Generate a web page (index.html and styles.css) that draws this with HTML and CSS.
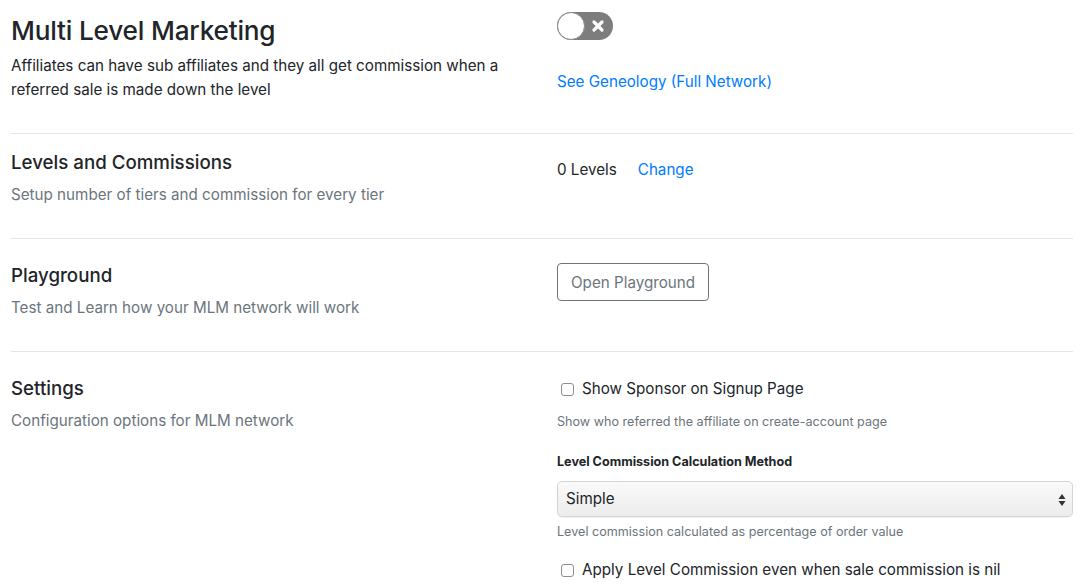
FILE: index.html
```html
<!DOCTYPE html>
<html>
<head>
<meta charset="utf-8">
<link rel="stylesheet" href="styles.css">
</head>
<body>
<div class="page">
  <section class="row row-mlm">
    <div class="col-left">
      <h3 class="title-lg">Multi Level Marketing</h3>
      <p class="desc-dark">Affiliates can have sub affiliates and they all get commission when a referred sale is made down the level</p>
    </div>
    <div class="col-right">
      <div class="toggle">
        <span class="knob"></span>
        <svg class="toggle-x" width="14" height="14" viewBox="0 0 14 14"><path d="M3 3 L11 11 M11 3 L3 11" stroke="#fff" stroke-width="3.2" stroke-linecap="round"/></svg>
      </div>
      <a class="link geneology" href="#">See Geneology (Full Network)</a>
    </div>
  </section>
  <hr class="sep">
  <section class="row row-levels">
    <div class="col-left">
      <h5 class="title">Levels and Commissions</h5>
      <p class="desc">Setup number of tiers and commission for every tier</p>
    </div>
    <div class="col-right">
      <div class="levels"><span>0 Levels</span><a class="link" href="#">Change</a></div>
    </div>
  </section>
  <hr class="sep">
  <section class="row row-play">
    <div class="col-left">
      <h5 class="title">Playground</h5>
      <p class="desc">Test and Learn how your MLM network will work</p>
    </div>
    <div class="col-right">
      <button class="btn">Open Playground</button>
    </div>
  </section>
  <hr class="sep">
  <section class="row row-settings">
    <div class="col-left">
      <h5 class="title">Settings</h5>
      <p class="desc">Configuration options for MLM network</p>
    </div>
    <div class="col-right">
      <label class="check"><span class="box"></span>Show Sponsor on Signup Page</label>
      <small class="help help-first">Show who referred the affiliate on create-account page</small>
      <div class="label-bold">Level Commission Calculation Method</div>
      <div class="select">
        <span>Simple</span>
        <svg class="arrows" width="8" height="14" viewBox="0 0 8 14"><path d="M4 1 L7.5 6 L0.5 6 Z M4 13 L7.5 8 L0.5 8 Z" fill="#333"/></svg>
      </div>
      <small class="help">Level commission calculated as percentage of order value</small>
      <label class="check check-last"><span class="box"></span>Apply Level Commission even when sale commission is nil</label>
    </div>
  </section>
</div>
</body>
</html>
```
FILE: styles.css
```css
* { box-sizing: border-box; }
html, body { margin: 0; padding: 0; background: #fff; }
body {
  font-family: Inter, "Noto Sans", "Liberation Sans", sans-serif;
  color: #212529;
  font-size: 15.2px;
  line-height: 24px;
}
.page { padding: 0 9px 0 11px; }
.row {
  display: grid;
  grid-template-columns: 546px 1fr;
}
h3, h5, p { margin: 0; }
.title-lg {
  font-size: 26.2px;
  font-weight: 500;
  line-height: 34px;
  letter-spacing: -0.2px;
  margin-bottom: 6px;
}
.desc-dark { font-size: 15.2px; line-height: 24px; max-width: 500px; }
.title {
  font-size: 18.7px;
  font-weight: 500;
  line-height: 24px;
  margin-bottom: 8px;
}
.desc { color: #6c757d; font-size: 15.2px; line-height: 24px; }
.sep { border: 0; border-top: 1px solid #e5e5e5; margin: 0; }

.row-mlm { padding-top: 14px; padding-bottom: 31px; }
.row-levels { padding-top: 17px; padding-bottom: 31px; }
.row-play { padding-top: 25px; padding-bottom: 31px; }
.row-settings { padding-top: 25px; }

.col-right { display: flex; flex-direction: column; align-items: flex-start; }

.toggle {
  position: relative;
  width: 56px; height: 28px;
  border-radius: 14px;
  background: #7d7d7d;
  margin-top: -2px;
}
.knob {
  position: absolute; left: 0; top: 0;
  width: 28px; height: 28px; border-radius: 50%;
  background: #fff;
  border: 1px solid #8a8a8a;
}
.toggle-x { position: absolute; left: 34px; top: 7px; }
.link { color: #007bff; text-decoration: none; font-size: 15.2px; }
.geneology { margin-top: 30px; }

.levels { display: flex; gap: 21px; margin-top: 7px; font-size: 15.2px; }

.btn {
  font-family: inherit;
  font-size: 15.2px;
  color: #6c757d;
  background: #fff;
  border: 1px solid #6c757d;
  border-radius: 4px;
  height: 38px;
  padding: 0 13px;
  margin-top: -1px;
}

.check { display: flex; align-items: center; font-size: 15.2px; line-height: 24px; padding-left: 4px; }
.box {
  width: 13px; height: 13px;
  border: 1px solid #8e8e8e;
  border-radius: 3px;
  margin-right: 8px;
  background: #fff;
}
.help { color: #6c757d; font-size: 12.6px; line-height: 19px; display: block; margin-top: 11px; }
.label-bold { font-size: 12.6px; font-weight: 700; margin-top: 21px; line-height: 19px; }
.select {
  position: relative;
  align-self: stretch;
  height: 36px;
  margin-top: 10px;
  border: 1px solid #d4d4d4;
  border-radius: 5px;
  background: linear-gradient(#fafafa, #ececec);
  box-shadow: 0 1px 1px rgba(0,0,0,0.06);
  padding: 0 8px;
  display: flex; align-items: center;
  font-size: 15.2px;
}
.arrows { position: absolute; right: 6px; top: 11px; }
.select + .help { margin-top: 5px; }
.check-last { margin-top: 17px; }
```
